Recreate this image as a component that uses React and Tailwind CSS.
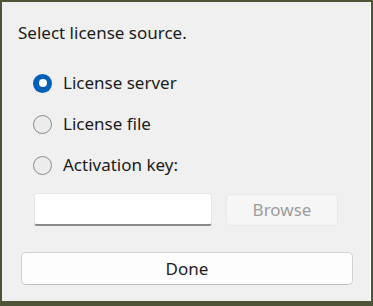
export default function App() {
  const font = { fontFamily: '"Noto Sans", "Open Sans", sans-serif' };
  return (
    <div className="w-[373px] h-[306px] bg-[#4d5536] pt-[2px] pl-[2px] overflow-hidden" style={font}>
      <div className="w-[369px] h-[299px] bg-[#f0f0f0] border-r border-white flex flex-col">
        <div className="pl-[16px] pt-[21px] text-[17px] leading-[20px] text-[#1b1b1b]">Select license source.</div>

        <div className="flex flex-col gap-[21px] pl-[31px] pt-[30px]">
          <Radio checked label="License server" />
          <Radio label="License file" />
          <Radio label="Activation key:" />
        </div>

        <div className="flex items-center pl-[32px] pt-[18px] gap-[14px]">
          <div className="w-[178px] h-[33px] bg-white border border-[#e5e5e5] border-b-2 border-b-[#8a8a8a] rounded-[3px]" />
          <div className="w-[112px] h-[32px] bg-[#f6f6f6] border border-[#e8e8e8] rounded-[4px] flex items-center justify-center text-[17px] text-[#9c9c9c]">
            Browse
          </div>
        </div>

        <div className="pl-[19px] pt-[26px]">
          <div className="w-[332px] h-[33px] bg-[#fdfdfd] border border-[#d0d0d0] border-b-[#c2c2c2] rounded-[5px] flex items-center justify-center text-[17px] text-[#1b1b1b]">
            Done
          </div>
        </div>
      </div>
    </div>
  );
}

function Radio({ checked, label }) {
  return (
    <div className="flex items-center gap-[11px] h-[20px]">
      {checked ? (
        <div className="w-[19px] h-[19px] rounded-full bg-[#005fb8] flex items-center justify-center">
          <div className="w-[8px] h-[8px] rounded-full bg-white" />
        </div>
      ) : (
        <div className="w-[19px] h-[19px] rounded-full border border-[#8a8a8a] bg-[#ececec]" />
      )}
      <span className="text-[17px] leading-[20px] text-[#1b1b1b]">{label}</span>
    </div>
  );
}
